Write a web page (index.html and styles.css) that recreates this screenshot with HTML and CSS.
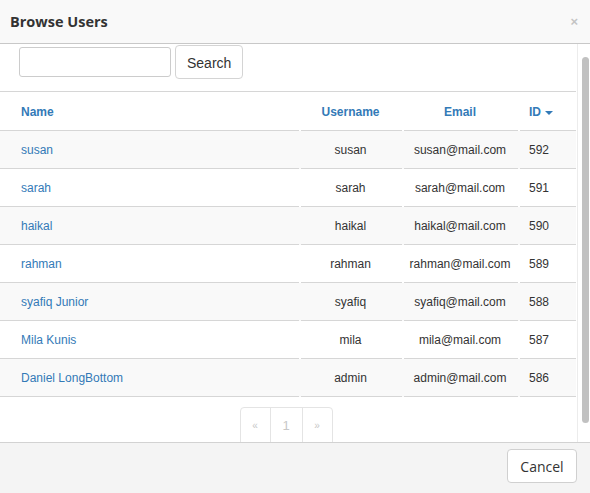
FILE: index.html
```html
<!DOCTYPE html>
<html>
<head>
<meta charset="utf-8">
<title>Browse Users</title>
<link rel="stylesheet" href="styles.css">
</head>
<body>
<div class="modal">
  <div class="modal-header">
    <h4 class="modal-title">Browse Users</h4>
    <span class="close">×</span>
  </div>
  <div class="modal-body">
    <div class="content">
      <form class="search-form">
        <input class="search-input" type="text">
        <button class="btn" type="button">Search</button>
      </form>
      <table class="users">
        <colgroup>
          <col class="w-name"><col class="w-user"><col class="w-email"><col class="w-id">
        </colgroup>
        <thead>
          <tr>
            <th class="col-name">Name</th>
            <th class="col-user">Username</th>
            <th class="col-email">Email</th>
            <th class="col-id">ID <span class="caret"></span></th>
          </tr>
        </thead>
        <tbody>
          <tr><td class="col-name"><a>susan</a></td><td class="col-user">susan</td><td class="col-email">susan@mail.com</td><td class="col-id">592</td></tr>
          <tr><td class="col-name"><a>sarah</a></td><td class="col-user">sarah</td><td class="col-email">sarah@mail.com</td><td class="col-id">591</td></tr>
          <tr><td class="col-name"><a>haikal</a></td><td class="col-user">haikal</td><td class="col-email">haikal@mail.com</td><td class="col-id">590</td></tr>
          <tr><td class="col-name"><a>rahman</a></td><td class="col-user">rahman</td><td class="col-email">rahman@mail.com</td><td class="col-id">589</td></tr>
          <tr><td class="col-name"><a>syafiq Junior</a></td><td class="col-user">syafiq</td><td class="col-email">syafiq@mail.com</td><td class="col-id">588</td></tr>
          <tr><td class="col-name"><a>Mila Kunis</a></td><td class="col-user">mila</td><td class="col-email">mila@mail.com</td><td class="col-id">587</td></tr>
          <tr><td class="col-name"><a>Daniel LongBottom</a></td><td class="col-user">admin</td><td class="col-email">admin@mail.com</td><td class="col-id">586</td></tr>
        </tbody>
      </table>
      <ul class="pagination">
        <li>«</li>
        <li class="page-num">1</li>
        <li>»</li>
      </ul>
    </div>
    <div class="scrollbar"><div class="thumb"></div></div>
  </div>
  <div class="modal-footer">
    <button class="btn btn-cancel" type="button">Cancel</button>
  </div>
</div>
</body>
</html>
```
FILE: styles.css
```css
* { box-sizing: border-box; }

html, body {
  margin: 0;
  padding: 0;
  width: 590px;
  height: 493px;
  overflow: hidden;
  background: #fff;
  font-family: "Liberation Sans", Arial, sans-serif;
  color: #333;
}

.modal {
  display: flex;
  flex-direction: column;
  width: 590px;
  height: 493px;
}

/* header */
.modal-header {
  height: 44px;
  flex: none;
  display: flex;
  align-items: center;
  justify-content: space-between;
  padding: 0 12px 1px 10px;
  background: #f9f9f9;
  border-bottom: 1px solid #c8c8c8;
}

.modal-title {
  margin: 0;
  font-family: "Open Sans", sans-serif;
  font-weight: 700;
  font-size: 14.5px;
  color: #333;
}

.close {
  font-family: "Liberation Sans", Arial, sans-serif;
  font-weight: 700;
  font-size: 13px;
  color: #c4c4c4;
  line-height: 1;
}

/* body */
.modal-body {
  flex: 1;
  display: flex;
  min-height: 0;
  overflow: hidden;
}

.content {
  width: 577px;
  flex: none;
  overflow: hidden;
}

.scrollbar {
  flex: 1;
  border-left: 1px solid #ececec;
  background: #fff;
  padding: 13px 1px 0 4px;
}

.thumb {
  height: 366px;
  background: #c1c1c1;
  border-radius: 4px;
}

/* search */
.search-form {
  display: flex;
  align-items: center;
  gap: 4px;
  padding: 1px 0 12px 19px;
  margin: 0;
}

.search-input {
  width: 152px;
  height: 30px;
  border: 1px solid #ccc;
  border-radius: 3px;
  padding: 4px 8px;
  font: 13px "Liberation Sans", Arial, sans-serif;
  background: #fff;
}

.btn {
  height: 34px;
  border: 1px solid #d4d4d4;
  border-radius: 4px;
  background: #fff;
  color: #333;
  padding: 1px 11px 0;
  font: 14px "Liberation Sans", Arial, sans-serif;
}

/* table */
.users {
  width: 576px;
  table-layout: fixed;
  border-collapse: separate;
  border-spacing: 0;
  border-top: 1px solid #d6d6d6;
  font-size: 12px;
  line-height: 17px;
}

.w-name { width: 299px; }
.w-user { width: 103px; }
.w-email { width: 116px; }
.w-id { width: 58px; }

.users th,
.users td {
  padding: 11px 6px 9px;
  white-space: nowrap;
  background-image: linear-gradient(#d6d6d6, #d6d6d6);
  background-repeat: no-repeat;
  background-size: calc(100% - 2px) 1px;
  background-position: 2px 100%;
  border-bottom: 1px solid transparent;
  background-origin: border-box;
  background-clip: border-box;
}

.users th:first-child,
.users td:first-child {
  background-size: 100% 1px;
  background-position: 0 100%;
}

.users th {
  color: #337ab7;
  font-weight: 700;
  padding-top: 12px;
}

.users tbody tr:nth-child(odd) td {
  background-color: #f9f9f9;
}

.col-name {
  text-align: left;
  padding-left: 21px !important;
}

.col-user,
.col-email {
  text-align: center;
}

.col-id {
  text-align: left;
  padding-left: 11px !important;
}

.users a {
  color: #337ab7;
}

.caret {
  display: inline-block;
  width: 0;
  height: 0;
  margin-left: 1px;
  vertical-align: middle;
  border-top: 4px solid #337ab7;
  border-left: 4px solid transparent;
  border-right: 4px solid transparent;
}

/* pagination */
.pagination {
  display: flex;
  justify-content: center;
  list-style: none;
  margin: 10px 0 0;
  padding: 0 4px 0 0;
}

.pagination li {
  height: 36px;
  display: flex;
  align-items: center;
  justify-content: center;
  border: 1px solid #e4e4e4;
  margin-left: -1px;
  color: #c8c8c8;
  font-size: 10px;
  width: 31px;
}

.pagination li:first-child {
  border-top-left-radius: 4px;
}

.pagination li:last-child {
  border-top-right-radius: 4px;
}

.pagination .page-num {
  font-size: 13px;
  width: 33px;
}

/* footer */
.modal-footer {
  height: 51px;
  flex: none;
  display: flex;
  justify-content: flex-end;
  align-items: center;
  padding: 0 13px 4px 0;
  background: #f4f4f4;
  border-top: 1px solid #d2d2d2;
}

.btn-cancel {
  width: 70px;
  height: 34px;
  padding: 0;
  font-family: "Open Sans", sans-serif;
  font-size: 14px;
  border-color: #d0d0d0;
}
```
